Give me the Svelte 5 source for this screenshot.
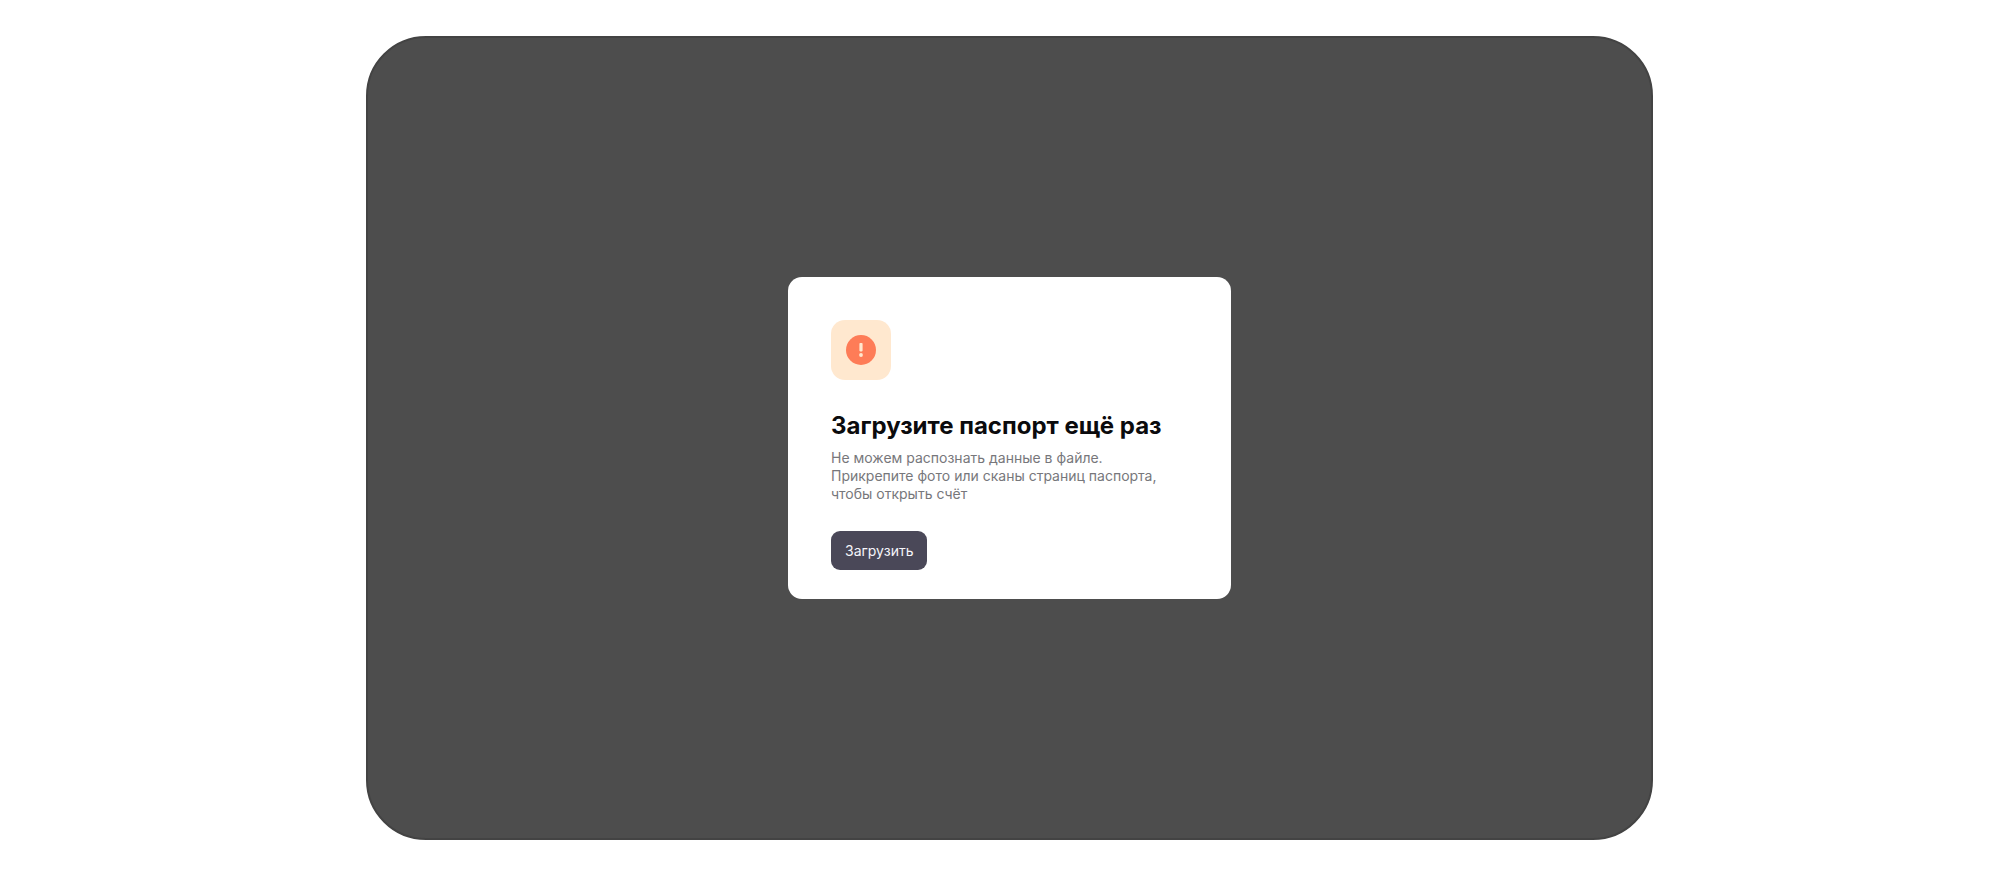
<script lang="ts">
  const lines = [
    'Не можем распознать данные в файле.',
    'Прикрепите фото или сканы страниц паспорта,',
    'чтобы открыть счёт',
  ];
</script>

<main class="page">
  <div class="backdrop">
    <section class="card" role="dialog" aria-labelledby="title">
      <div class="badge">
        <svg width="30" height="30" viewBox="0 0 30 30" aria-hidden="true">
          <circle cx="15" cy="15" r="15" fill="#fe7c57" />
          <rect x="13.4" y="8" width="3.2" height="8.4" rx="0.8" fill="#ffe8cf" />
          <circle cx="15" cy="20" r="1.9" fill="#ffe8cf" />
        </svg>
      </div>

      <h1 id="title">Загрузите паспорт ещё раз</h1>
      <p>
        {#each lines as line}
          <span>{line}</span>
        {/each}
      </p>

      <button type="button">Загрузить</button>
    </section>
  </div>
</main>

<style>
  :global(body) {
    margin: 0;
    background: #fff;
  }

  .page {
    box-sizing: border-box;
    min-height: 100vh;
    padding: 36px 0;
    display: flex;
    justify-content: center;
    font-family: Inter, 'Liberation Sans', sans-serif;
  }

  .backdrop {
    box-sizing: border-box;
    min-height: calc(100vh - 72px);
    aspect-ratio: 8 / 5;
    display: flex;
    align-items: center;
    justify-content: center;
    margin-left: 3px;
    border: 2px solid #434343;
    border-radius: 60px;
    background: #4d4d4d;
  }

  .card {
    box-sizing: border-box;
    width: 443px;
    padding: 43px 43px 29px;
    border-radius: 14px;
    background: #fff;
  }

  .badge {
    width: 60px;
    height: 60px;
    display: flex;
    align-items: center;
    justify-content: center;
    border-radius: 14px;
    background: #ffe8cf;
  }

  h1 {
    margin: 31px 0 8px;
    color: #0b0b0d;
    font-size: 24px;
    line-height: 30px;
    font-weight: 700;
    white-space: nowrap;
  }

  p {
    margin: 0 0 28px;
    color: #77777b;
    font-size: 14px;
    line-height: 18px;
  }

  p span {
    display: block;
    white-space: nowrap;
  }

  button {
    display: block;
    height: 39px;
    padding: 0 14px;
    border: 0;
    border-radius: 9px;
    background: #4a4858;
    color: #f5f5fa;
    font: inherit;
    font-size: 14px;
    cursor: pointer;
  }
</style>
